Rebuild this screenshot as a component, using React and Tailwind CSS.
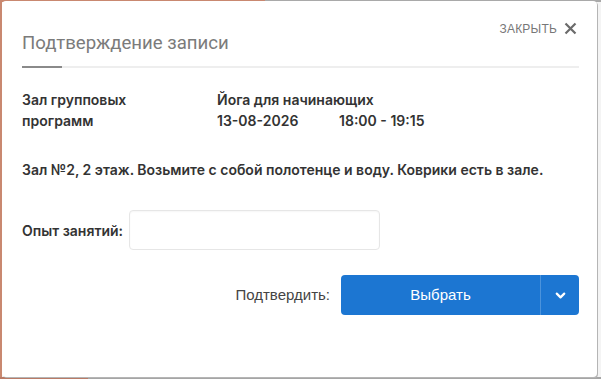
import { ChevronDown } from "lucide-react";

export default function App() {
  return (
    <div className="relative w-[601px] h-[379px] overflow-hidden bg-[#f4f4f4]">
      {/* page behind the modal */}
      <div className="absolute left-0 top-0 w-[265px] h-[2px] bg-[#c98870]" />
      <div className="absolute left-[265px] top-0 right-0 h-[2px] bg-[#a9a9a9]" />
      <div className="absolute left-0 top-0 w-[2px] h-full bg-[#c98870]" />
      <div className="absolute left-0 bottom-0 w-[88px] h-[2px] bg-[#b97a66]" />
      <div className="absolute left-[88px] bottom-0 right-0 h-[2px] bg-[#a5a5a5]" />

      {/* modal */}
      <div className="relative ml-[2px] mt-[1px] w-[595px] h-[376px] bg-white rounded-[4px] shadow-[1px_1px_0_#b5b5b5] pl-[20px] pr-[18px] font-['Inter',sans-serif] text-[#333]">
        <div className="flex justify-end items-center pt-[20px] h-[35px] gap-[7px] text-[#777]">
          <span className="font-['Liberation_Sans',sans-serif] text-[12px] tracking-[0.2px]">ЗАКРЫТЬ</span>
          <svg width="13" height="13" viewBox="0 0 13 13" className="mr-[2px]">
            <path d="M1.5 1.5L11.5 11.5M11.5 1.5L1.5 11.5" stroke="#6b6b6b" strokeWidth="2.2" />
          </svg>
        </div>
        <h2 className="mt-[-5px] font-['Roboto',sans-serif] text-[18.6px] leading-[24px] text-[#7b7b7b]">Подтверждение записи</h2>
        <div className="mt-[11px] flex h-[2px] bg-[#eeeeee]">
          <div className="w-[40px] h-[2px] bg-[#8a8a8a]" />
        </div>

        <div className="mt-[21px] flex text-[14px] font-semibold leading-[21px]">
          <div className="w-[195px]">
            <div>Зал групповых</div>
            <div>программ</div>
          </div>
          <div>
            <div>Йога для начинающих</div>
            <div className="flex">
              <span className="w-[122px]">13-08-2026</span>
              <span>18:00 - 19:15</span>
            </div>
          </div>
        </div>

        <p className="mt-[28px] text-[14px] font-semibold leading-[21px]">
          Зал №2, 2 этаж. Возьмите с собой полотенце и воду. Коврики есть в зале.
        </p>

        <div className="mt-[30px] flex items-center gap-[6px]">
          <label className="text-[14px] font-semibold">Опыт занятий:</label>
          <input className="w-[251px] h-[40px] border border-[#e6e6e6] rounded-[4px] shadow-[inset_0_1px_2px_rgba(0,0,0,0.04)] outline-none px-2" />
        </div>

        <div className="mt-[25px] flex justify-end items-center">
          <span className="mr-[11px] font-['Liberation_Sans',sans-serif] text-[15px] text-[#444]">Подтвердить:</span>
          <div className="flex h-[40px] w-[238px] rounded-[4px] bg-[#1c76d2] text-white overflow-hidden">
            <button className="flex-1 font-['Liberation_Sans',sans-serif] text-[15px]">Выбрать</button>
            <div className="w-[1px] bg-[#4b93dc]" />
            <button className="w-[38px] flex items-center justify-center">
              <ChevronDown size={15} strokeWidth={3.5} />
            </button>
          </div>
        </div>
      </div>
    </div>
  );
}
